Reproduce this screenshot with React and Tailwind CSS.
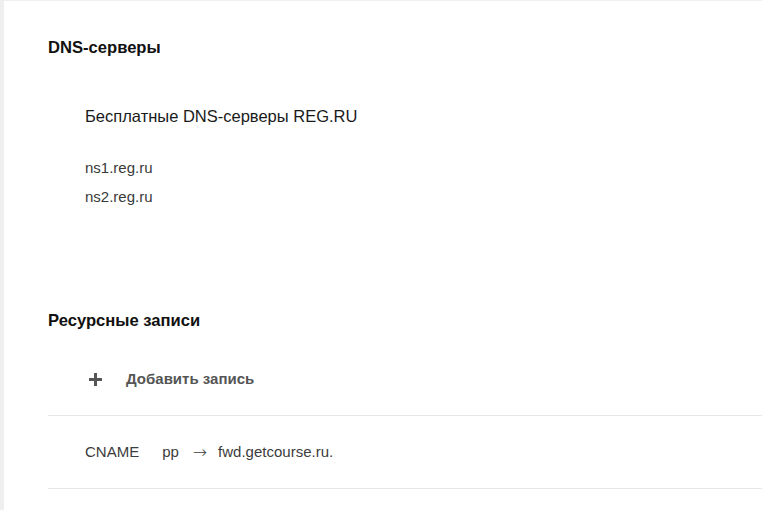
export default function App() {
  return (
    <div className="min-h-screen bg-[#efefef] pl-[4px] pt-[1px]" style={{ fontFamily: '"Liberation Sans", Arial, sans-serif' }}>
      <div className="min-h-[509px] bg-white pl-[44px] pt-[37px]">
        <h2 className="text-[16.6px] leading-[20px] font-bold text-[#111]">DNS-серверы</h2>
        <div className="pl-[37px]">
          <p className="mt-[48px] text-[16.5px] leading-[20px] text-[#1a1a1a]">Бесплатные DNS-серверы REG.RU</p>
          <div className="mt-[27px] text-[15px] leading-[29px] text-[#3a3a3a]">
            <div>ns1.reg.ru</div>
            <div>ns2.reg.ru</div>
          </div>
        </div>
        <h2 className="mt-[100px] text-[16.6px] leading-[20px] font-bold text-[#111]">Ресурсные записи</h2>
        <div className="mt-[13px] flex h-[72px] items-center border-b border-[#e6e6e6] pl-[41px]">
          <svg width="13" height="13" viewBox="0 0 13 13" className="shrink-0">
            <rect x="5" y="0" width="3" height="13" fill="#555" />
            <rect x="0" y="5" width="13" height="3" fill="#555" />
          </svg>
          <span className="ml-[24px] text-[15px] font-bold text-[#555]">Добавить запись</span>
        </div>
        <div className="flex h-[73px] items-center border-b border-[#e6e6e6] pl-[37px] text-[15px] text-[#3c3c3c]">
          <span>CNAME</span>
          <span className="ml-[23px]">pp</span>
          <span className="ml-[14px] text-[17px] leading-none font-light" style={{ fontFamily: '"DejaVu Sans", sans-serif' }}>→</span>
          <span className="ml-[11px]">fwd.getcourse.ru.</span>
        </div>
      </div>
    </div>
  );
}
